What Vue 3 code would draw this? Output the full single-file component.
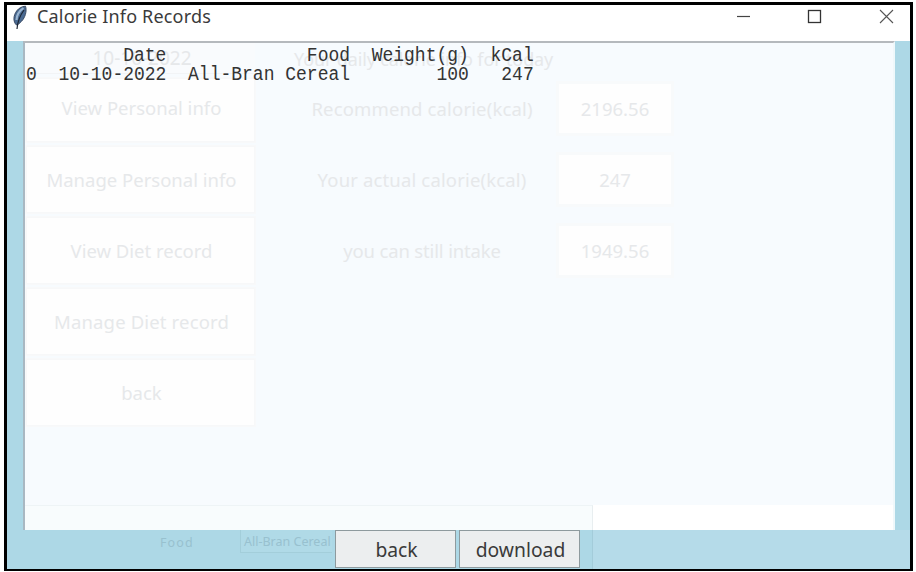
<script setup>
const rows = [
  '         Date             Food  Weight(g)  kCal',
  '0  10-10-2022  All-Bran Cereal        100   247',
]
const menu = [
  { label: 'View Personal info', cls: 'm1' },
  { label: 'Manage Personal info', cls: 'm2' },
  { label: 'View Diet record', cls: 'm3' },
  { label: 'Manage Diet record', cls: 'm4' },
  { label: 'back', cls: 'm5' },
]
const stats = [
  { label: 'Recommend calorie(kcal)', value: '2196.56', cls: 's1' },
  { label: 'Your actual calorie(kcal)', value: '247', cls: 's2' },
  { label: 'you can still intake', value: '1949.56', cls: 's3' },
]
</script>

<template>
  <div class="page">
    <div class="window">
      <header class="titlebar">
        <svg class="feather" width="15" height="25" viewBox="0 0 15 25">
          <path d="M4.500 20 C1 17 1 10.500 5 5.500 C7 3 10 1.500 13.500 1.200 C14.800 5 13.800 10.500 11 14.500 C9.200 17 7 18.500 5.500 20 Z" fill="#4a6a92" stroke="#3a4a63" stroke-width="1" />
          <path d="M4.500 15 C4.800 9.500 8 5.500 11.500 3.200" fill="none" stroke="#9bb6d2" stroke-width="2.200" />
          <path d="M5 24 C5.500 17 8 10.500 12 5" fill="none" stroke="#1c2533" stroke-width="1.200" />
        </svg>
        <h1 class="title">Calorie Info Records</h1>
        <svg class="controls" width="160" height="16" viewBox="0 0 160 16">
          <path d="M0 8.500 H13" stroke="#444" stroke-width="1.200" />
          <rect x="71.500" y="2.500" width="12" height="12" fill="none" stroke="#333" stroke-width="1.300" />
          <path d="M143 2 L156 15 M156 2 L143 15" stroke="#555" stroke-width="1.100" />
        </svg>
      </header>
      <main class="body">
        <div class="textbox">
          <div class="ghost">
            <div class="menu">
              <div class="date"><span class="t">10-10-2022</span></div>
              <div v-for="m in menu" :key="m.label" class="menu-btn"><span class="t" :class="m.cls">{{ m.label }}</span></div>
            </div>
            <div class="stats">
              <div class="heading"><span class="t">Your daily calorie info for today</span></div>
              <div v-for="s in stats" :key="s.label" class="stat">
                <span class="stat-label"><span class="t" :class="s.cls">{{ s.label }}</span></span>
                <span class="stat-value"><span class="t">{{ s.value }}</span></span>
              </div>
            </div>
          </div>
          <div class="strip"><div class="strip-left"></div></div>
          <div class="records"><pre v-for="r in rows" :key="r" class="record">{{ r }}</pre></div>
        </div>
        <footer class="footer">
          <div class="foot-left">
            <span class="food">Food</span>
            <span class="combo">All-Bran Cereal</span>
          </div>
          <button class="btn">back</button>
          <button class="btn">download</button>
          <div class="foot-gap"></div>
          <div class="foot-right"></div>
        </footer>
      </main>
    </div>
  </div>
</template>

<style>
body { background: #fff; overflow: hidden; }
</style>
<style scoped>
* { box-sizing: border-box; }
.page { width: 916px; height: 572px; padding: 2px 3px 1px 4px; background: #fff; font-family: "Noto Sans", "Open Sans", sans-serif; }
.window { width: 909px; height: 569px; border: 3px solid #000; border-bottom-width: 2px; display: flex; flex-direction: column; background: #fff; }
.titlebar { height: 36px; flex: none; display: flex; align-items: flex-start; padding: 0 13px 0 5px; }
.feather { flex: none; }
.title { margin: 0 0 0 10px; font-size: 18px; line-height: 23px; font-weight: 400; color: #3a3a3a; white-space: nowrap; letter-spacing: 0.17px; flex: 1; }
.controls { margin-top: 3px; flex: none; }
.body { flex: 1; min-height: 0; background: #add8e6; display: flex; flex-direction: column; padding: 0 15px 0 16px; }
.textbox { position: relative; height: 489px; flex: none; border-left: 2px solid #a9b8c2; border-top: 2px solid #b5b9bd; border-right: 2px solid #eff8fb; background: #f7fbfe; display: flex; flex-direction: column; }
.ghost { height: 462px; flex: none; display: flex; color: #e6e8ea; font-size: 18.5px; }
.t { white-space: nowrap; display: inline-block; }
.menu { width: 230px; padding-left: 1px; display: flex; flex-direction: column; gap: 4px; }
.date { height: 31px; flex: none; display: flex; align-items: center; justify-content: center; background: #f9fbfd; border-bottom: 1px solid #f2f4f6; font-size: 19px; padding-left: 3px; }
.menu-btn { height: 67px; flex: none; background: #fefefe; border: 1px solid #f7f8f9; box-shadow: 0 0 0 1px #f8f9fa; display: flex; align-items: center; justify-content: center; padding-left: 2px; }
.menu-btn:nth-child(2) { height: 64px; padding-bottom: 5px; }
.m4 { letter-spacing: 0.15px; }
.stats { width: 430px; margin-left: 12px; display: flex; flex-direction: column; }
.heading { height: 38px; padding: 3px 0 0 27px; line-height: 26px; font-size: 18px; letter-spacing: -0.13px; }
.stat { height: 55px; margin-bottom: 16px; display: flex; margin-left: 20px; }
.stat-label { width: 269px; padding-left: 1px; display: flex; align-items: center; justify-content: center; letter-spacing: 0.15px; }
.s3 { letter-spacing: -0.15px; }
.stat-value { width: 118px; flex: none; background: #fefefe; border: 3px solid #f8fafb; display: flex; align-items: center; justify-content: center; }
.strip { flex: 1; background: #fff; display: flex; }
.strip-left { width: 568px; background: #f8fcfd; border-top: 1px solid #eef4f6; border-right: 1px solid #e8eef0; }
.records { position: absolute; left: 1px; top: 3px; }
.record { margin: 0; font-family: "Liberation Mono", monospace; font-size: 18px; line-height: 19px; height: 19px; color: #333; transform: scaleY(1.15); }
.footer { flex: 1; display: flex; gap: 3px; margin-right: -15px; }
.foot-left { width: 309px; display: flex; align-items: flex-start; font-size: 12.5px; color: #98c1cf; }
.food { margin: 4px 0 0 137px; width: 80px; letter-spacing: 1.1px; }
.combo { flex: 1; height: 23px; padding: 3px 0 0 3px; border: 1px solid #a3ceda; border-width: 0 0 1px 1px; background: #b0dae7; white-space: nowrap; }
.btn { width: 121px; height: 38px; padding: 0 0 0 2px; border: 1px solid #8e9a9e; background: #eceeef; color: #3a3a3a; font: 400 19.3px "Noto Sans", sans-serif; }
.foot-gap { width: 10px; border-right: 1px solid #a3ccda; }
.foot-right { flex: 1; background: #b5dbe9; margin-left: -3px; }
</style>
